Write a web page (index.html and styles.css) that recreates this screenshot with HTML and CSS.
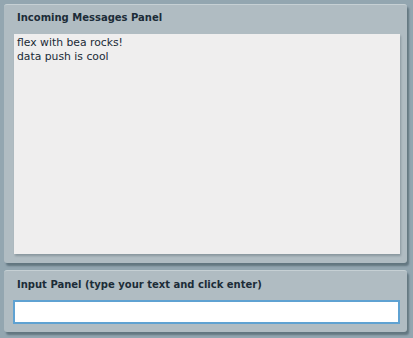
FILE: index.html
```html
<!DOCTYPE html>
<html lang="en">
<head>
    <meta charset="UTF-8">
    <title>Bea Flex Chat</title>
    <link rel="stylesheet" href="styles.css">
</head>
<body>
    <div class="panel" id="incoming-panel">
        <h2 class="panel-title">Incoming Messages Panel</h2>
        <div class="messages" id="messages">
            <p>flex with bea rocks!</p>
            <p>data push is cool</p>
        </div>
    </div>

    <div class="panel" id="input-panel">
        <h2 class="panel-title">Input Panel (type your text and click enter)</h2>
        <input type="text" class="message-input" id="message-input">
    </div>
</body>
</html>
```

FILE: styles.css
```css
* {
    box-sizing: border-box;
    margin: 0;
    padding: 0;
}

html, body {
    height: 338px;
    overflow: hidden;
}

body {
    font-family: "DejaVu Sans", Verdana, sans-serif;
    background-color: #93a6b0;
    padding: 4px 6px 0 4px;
    display: flex;
    flex-direction: column;
    gap: 7px;
}

.panel {
    background: #b0bcc2;
    border-top: 1px solid #c6d0d4;
    border-radius: 3px;
    box-shadow: 2px 3px 2px #627680;
}

.panel-title {
    font-size: 10px;
    font-weight: bold;
    color: #1c2c38;
    line-height: 14px;
}

#incoming-panel {
    padding: 6px 7px 9px 10px;
}

#incoming-panel .panel-title {
    padding: 0 0 9px 3px;
}

.messages {
    height: 220px;
    background: #efeeee;
    padding: 2px 3px;
    box-shadow: 1px 2px 2px #8a989f;
    font-size: 10.8px;
    line-height: 14px;
    color: #1a2a36;
}

#input-panel {
    height: 62px;
    padding: 7px 7px 0 9px;
}

#input-panel .panel-title {
    padding: 0 0 8px 4px;
}

.message-input {
    display: block;
    width: 100%;
    height: 24px;
    background: #ffffff;
    border: 2px solid #5fa2d2;
    font-family: "DejaVu Sans", Verdana, sans-serif;
    font-size: 10px;
    outline: none;
}
```
